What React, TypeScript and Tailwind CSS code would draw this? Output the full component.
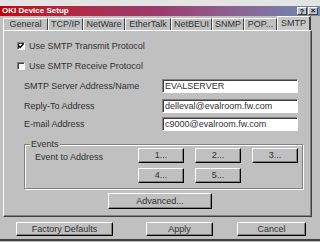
import type { ReactNode } from 'react';

const tabs = [
  { label: 'General', w: 'w-[45px]' },
  { label: 'TCP/IP', w: 'w-[35px]' },
  { label: 'NetWare', w: 'w-[42px]' },
  { label: 'EtherTalk', w: 'w-[46px]' },
  { label: 'NetBEUI', w: 'w-[41px]' },
  { label: 'SNMP', w: 'w-[32px]' },
  { label: 'POP...', w: 'w-[33px]' },
];

const WinButton = ({ children, className = '' }: { children: ReactNode; className?: string }) => (
  <div
    className={`flex items-center justify-center border border-t-white border-l-white border-r-black border-b-black shadow-[inset_-1px_-1px_0_#808080] bg-[#c0c0c0] text-[#303030] ${className}`}
  >
    {children}
  </div>
);

const TextBox = ({ value }: { value: string }) => (
  <div className="w-[136px] h-[14px] flex items-center pl-[2px] bg-white border border-t-[#808080] border-l-[#808080] border-r-white border-b-white shadow-[inset_1px_1px_0_#404040] text-[#303030]">
    {value}
  </div>
);

const CheckBox = ({ checked }: { checked?: boolean }) => (
  <div className="w-[8px] h-[8px] bg-white border border-t-[#808080] border-l-[#808080] border-r-white border-b-white shadow-[inset_1px_1px_0_#404040] flex items-center justify-center">
    {checked && (
      <svg width="6" height="6" viewBox="0 0 6 6">
        <path d="M0.5 2.5 L2.2 4.5 L5.5 0.8" fill="none" stroke="#000" strokeWidth="1.3" />
      </svg>
    )}
  </div>
);

const FieldRow = ({ label, value, className = '' }: { label: string; value: string; className?: string }) => (
  <div className={`flex items-center h-[14px] pl-[20px] ${className}`}>
    <div className="w-[138px] text-[#303030]">{label}</div>
    <TextBox value={value} />
  </div>
);

export default function App() {
  return (
    <div className="w-[320px] h-[242px] overflow-hidden bg-[#c0c0c0] flex flex-col font-['Liberation_Sans',Arial,sans-serif] text-[9px] leading-none text-[#303030]">
      <div className="h-[6px] bg-[#e4e4e4]" />
      <div className="h-[10px] flex items-center pl-[2px] pr-[2px] bg-gradient-to-r from-[#c00000] via-[#9a3a70] to-[#6a88b8]">
        <span className="text-white font-bold text-[8px] flex-1">OKI Device Setup</span>
        <div className="flex gap-[1px]">
          <div className="w-[10px] h-[8px] bg-[#c0c0c0] border-t border-l border-white border-r border-b border-r-[#404040] border-b-[#404040] flex items-center justify-center text-[7px] font-bold text-black">?</div>
          <div className="w-[10px] h-[8px] bg-[#c0c0c0] border-t border-l border-white border-r border-b border-r-[#404040] border-b-[#404040] flex items-center justify-center text-[8px] font-bold text-black">×</div>
        </div>
      </div>

      <div className="h-[14px] flex items-end pl-[3px]">
        {tabs.map((t) => (
          <div
            key={t.label}
            className={`${t.w} h-[12px] flex items-center justify-center border-t border-l border-white border-r border-r-[#404040]`}
          >
            {t.label}
          </div>
        ))}
        <div className="w-[34px] h-[14px] flex items-center justify-center border-t border-l border-white border-r-2 border-r-[#404040] bg-[#c8c8c8]">
          SMTP
        </div>
      </div>

      <div className="ml-[3px] w-[309px] h-[187px] border border-t-white border-l-white border-r-[#404040] border-b-[#404040] shadow-[inset_-1px_-1px_0_#808080] flex flex-col">
        <div className="flex items-center h-[12px] mt-[9px] pl-[13px] gap-[4px]">
          <CheckBox checked />
          <span>Use SMTP Transmit Protocol</span>
        </div>
        <div className="flex items-center h-[12px] mt-[8px] pl-[13px] gap-[4px]">
          <CheckBox />
          <span>Use SMTP Receive Protocol</span>
        </div>
        <FieldRow label="SMTP Server Address/Name" value="EVALSERVER" className="mt-[7px]" />
        <FieldRow label="Reply-To Address" value="delleval@evalroom.fw.com" className="mt-[6px]" />
        <FieldRow label="E-mail Address" value="c9000@evalroom.fw.com" className="mt-[4px]" />

        <div className="relative ml-[20px] mt-[13px] w-[279px] h-[45px] border border-[#808080] shadow-[1px_1px_0_#fff,inset_1px_1px_0_#fff]">
          <span className="absolute left-[5px] top-[-5px] px-[1px] bg-[#c0c0c0]">Events</span>
          <div className="flex pt-[3px]">
            <div className="w-[113px] pl-[10px] pt-[5px]">Event to Address</div>
            <div className="grid grid-cols-[46px_46px_46px] gap-x-[11px] gap-y-[5px]">
              <WinButton className="h-[15px]">1...</WinButton>
              <WinButton className="h-[15px]">2...</WinButton>
              <WinButton className="h-[15px]">3...</WinButton>
              <WinButton className="h-[15px]">4...</WinButton>
              <WinButton className="h-[15px]">5...</WinButton>
            </div>
          </div>
        </div>

        <WinButton className="ml-[104px] mt-[4px] w-[104px] h-[16px]">Advanced...</WinButton>
      </div>

      <div className="flex h-[14px] mt-[5px]">
        <WinButton className="ml-[16px] w-[97px] h-[14px]">Factory Defaults</WinButton>
        <WinButton className="ml-[33px] w-[67px] h-[14px]">Apply</WinButton>
        <WinButton className="ml-[24px] w-[69px] h-[14px]">Cancel</WinButton>
      </div>
      <div className="mt-[3px] h-[2px] bg-[#404040]" />
    </div>
  );
}
